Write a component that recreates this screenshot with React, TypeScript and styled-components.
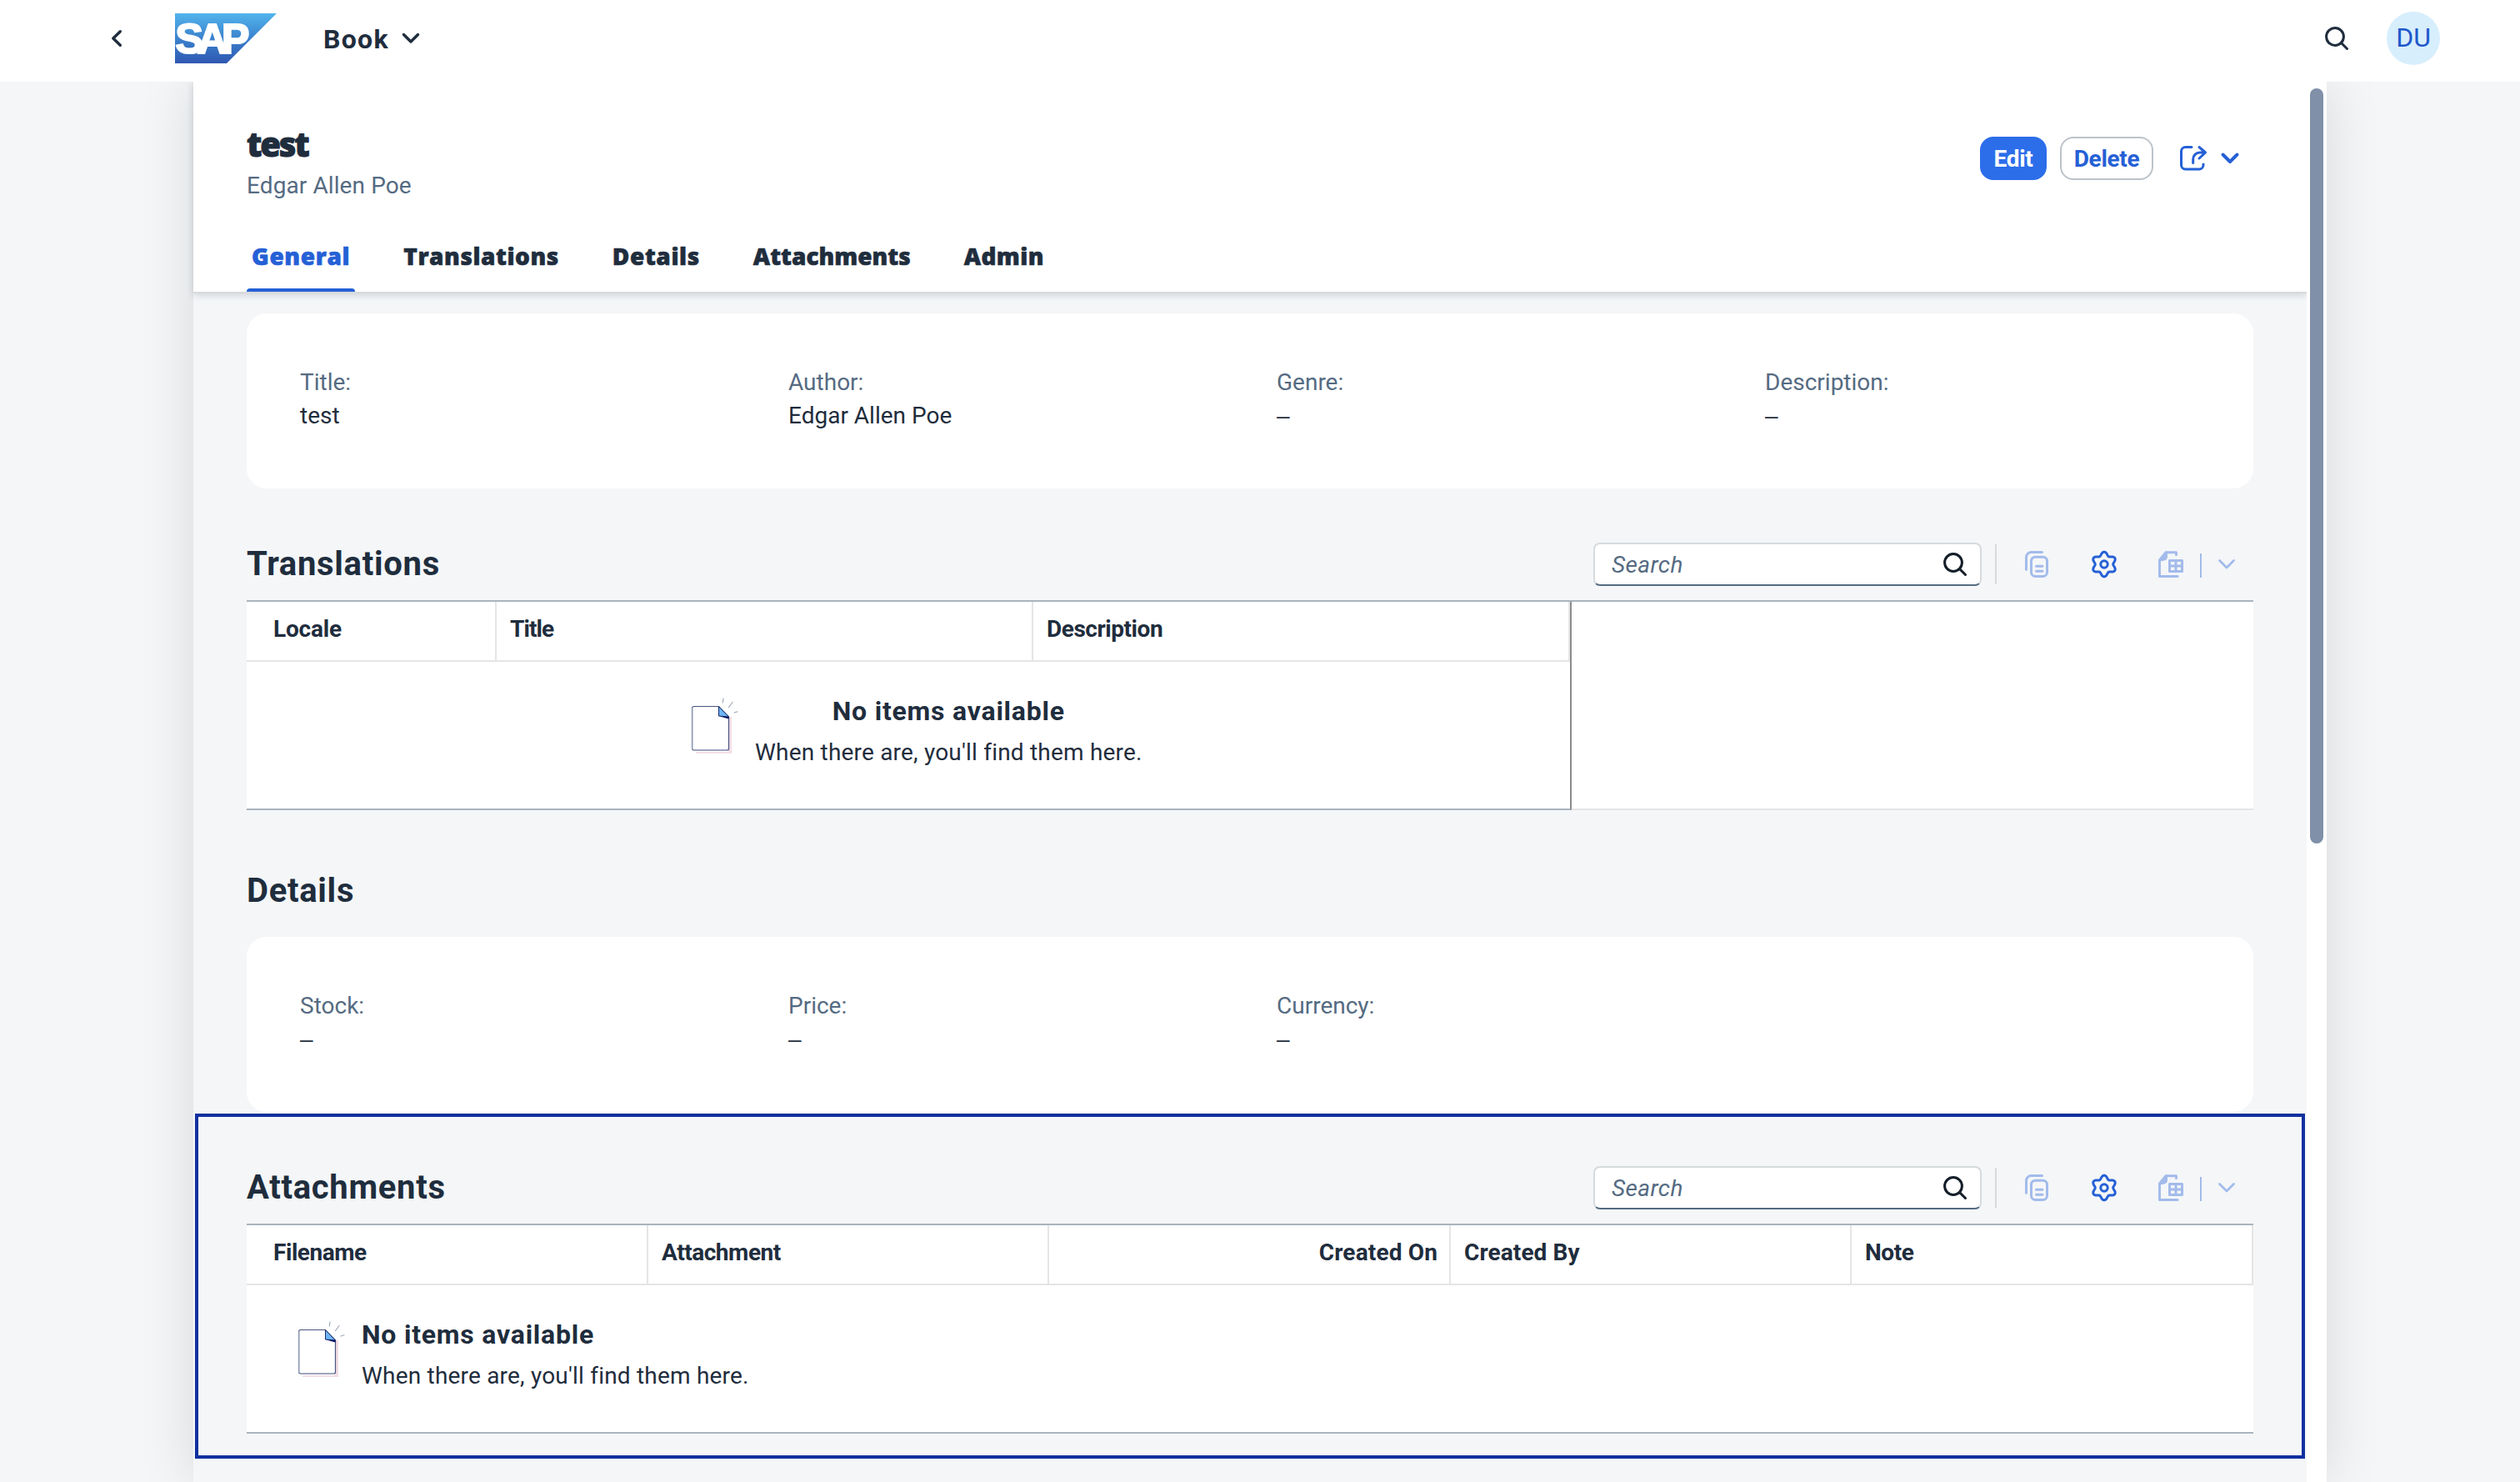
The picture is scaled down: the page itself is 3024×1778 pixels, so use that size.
import React from "react";
import styled, { createGlobalStyle, css } from "styled-components";

const ink = "#1f2d3d";
const blue = "#2560d6";
const faded = "#a3bbeb";

const GlobalStyle = createGlobalStyle`
  * { box-sizing: border-box; }
  body {
    margin: 0;
    background: #f4f6f8;
    color: ${ink};
    font-family: Roboto, "Liberation Sans", sans-serif;
    font-size: 28px;
  }
  h1, h2, h3, p { margin: 0; }
  svg { display: block; flex: none; overflow: visible; }
`;

const Screen = styled.div`
  display: flex;
  flex-direction: column;
  width: 3024px;
  height: 1778px;
  overflow: hidden;
`;

const ShellBar = styled.header`
  display: flex;
  align-items: center;
  height: 98px;
  flex: none;
  padding: 0 96px 6px 134px;
  background: #fff;
  z-index: 1;
`;

const AppMenu = styled.div`
  display: flex;
  align-items: center;
  gap: 15px;
  margin-left: 56px;
  font-size: 32px;
  font-weight: 700;
  letter-spacing: 1.3px;
  line-height: 44px;
`;

const AppName = styled.span`
  padding-top: 2px;
`;

const Logo = styled.div`
  margin-left: 64px;
`;

const ShellTools = styled.div`
  display: flex;
  align-items: center;
  gap: 46px;
  margin-left: auto;
`;

const Avatar = styled.div`
  width: 64px;
  height: 64px;
  border-radius: 50%;
  background: #d7eefd;
  color: #1f58cb;
  font-size: 32px;
  line-height: 63px;
  text-align: center;
`;

const Page = styled.main`
  display: flex;
  width: 2560px;
  flex: 1;
  min-height: 0;
  margin: 0 auto;
  background: #f4f6f8;
  box-shadow: 0 0 64px rgba(0, 0, 0, 0.12);
`;

const Content = styled.div`
  display: flex;
  flex-direction: column;
  width: 2536px;
`;

const Track = styled.div`
  width: 24px;
  padding: 8px 4px;
  background: #fff;
`;

const Thumb = styled.div`
  height: 906px;
  border-radius: 8px;
  background: #7f90a8;
`;

const PageHeader = styled.section`
  height: 254px;
  flex: none;
  padding: 52px 64px 0;
  background: #fff;
  border-bottom: 2px solid #d8dadb;
  box-shadow: 0 2px 8px rgba(34, 53, 72, 0.18);
`;

const TitleRow = styled.div`
  display: flex;
  justify-content: space-between;
  height: 116px;
`;

const PageTitle = styled.h1`
  font-family: "Open Sans", Roboto, sans-serif;
  font-size: 40px;
  font-weight: 800;
  line-height: 46px;
  letter-spacing: -2.2px;
  -webkit-text-stroke: 1px ${ink};
`;

const Subtitle = styled.p`
  margin-top: 11px;
  color: #556b82;
  line-height: 32px;
  letter-spacing: 0.1px;
`;

const Actions = styled.div`
  display: flex;
  align-items: center;
  gap: 16px;
  height: 52px;
  margin: 14px 17px 0 0;
`;

const Button = styled.button<{ $primary?: boolean }>`
  width: ${(p) => (p.$primary ? 80 : 112)}px;
  height: 52px;
  padding: 0;
  border: 2px solid ${(p) => (p.$primary ? "#2c6eea" : "#bcc3ca")};
  border-radius: 16px;
  background: ${(p) => (p.$primary ? "#2c6eea" : "#fff")};
  color: ${(p) => (p.$primary ? "#fff" : blue)};
  font: 700 28px Roboto, "Liberation Sans", sans-serif;
  letter-spacing: -0.3px;
`;

const ShareMenu = styled.div`
  display: flex;
  align-items: center;
  gap: 17px;
  margin-left: 16px;
`;

const Tabs = styled.nav`
  display: flex;
  gap: 52px;
  height: 84px;
`;

const Tab = styled.div<{ $active?: boolean; $tracking: number }>`
  position: relative;
  padding: 0 6px;
  font-family: "Open Sans", Roboto, sans-serif;
  font-weight: 800;
  line-height: 82px;
  letter-spacing: ${(p) => p.$tracking}px;
  color: ${(p) => (p.$active ? blue : ink)};
  -webkit-text-stroke: 0.6px currentColor;
  ${(p) =>
    p.$active &&
    css`
      &::after {
        content: "";
        position: absolute;
        left: 0;
        right: 0;
        bottom: 0;
        height: 4px;
        border-radius: 4px 4px 0 0;
        background: ${blue};
      }
    `}
`;

const Card = styled.section<{ $first?: boolean }>`
  display: grid;
  grid-template-columns: repeat(4, 586px);
  height: 210px;
  flex: none;
  margin: ${(p) => (p.$first ? 24 : 12)}px 64px 0;
  padding: 63px 0 0 64px;
  border-radius: 24px;
  background: #fff;
  line-height: 40px;
`;

const Label = styled.p`
  color: #556b82;
`;

const Value = styled.p<{ $blank?: boolean }>`
  ${(p) => p.$blank && 'font-family: "Liberation Sans", sans-serif;'}
`;

const Section = styled.section<{ $top: number }>`
  flex: none;
  margin: ${(p) => p.$top}px 64px 0;
`;

const Frame = styled.section`
  flex: none;
  height: 414px;
  margin: 2px 2px 0;
  padding: 42px 58px 0;
  border: 4px solid #1030a0;
`;

const SectionHead = styled.div`
  display: flex;
  align-items: center;
  height: 86px;
`;

const SectionTitle = styled.h2`
  font-size: 40px;
  font-weight: 700;
  line-height: 48px;
  letter-spacing: 0.7px;
`;

const Toolbar = styled.div`
  display: flex;
  align-items: center;
  margin-left: auto;
  padding-right: 2px;
`;

const SearchBox = styled.div`
  display: flex;
  align-items: center;
  justify-content: space-between;
  width: 466px;
  height: 52px;
  padding: 0 16px 0 20px;
  border: 2px solid #d5dadd;
  border-bottom-color: #556b82;
  border-radius: 8px;
  background: #fff;
  color: #556b82;
  font-style: italic;
  letter-spacing: 0.4px;
`;

const Divider = styled.div`
  width: 2px;
  height: 48px;
  margin: 0 12px 0 16px;
  background: #d9d9d9;
`;

const ToolButton = styled.div<{ $w?: number }>`
  display: flex;
  align-items: center;
  justify-content: center;
  width: ${(p) => p.$w ?? 72}px;
  height: 52px;
  margin-right: ${(p) => (p.$w ? 0 : 9)}px;
`;

const SplitLine = styled.div`
  width: 2px;
  height: 29px;
  margin-top: 2px;
  background: ${faded};
`;

const Table = styled.div`
  height: 252px;
  border-top: 2px solid #a9b4be;
  border-bottom: 2px solid #e5e5e5;
  background: #fff;
`;

const Grid = styled.div<{ $width: number; $edge?: boolean }>`
  width: ${(p) => p.$width}px;
  height: 250px;
  border-bottom: 2px solid #a9b4be;
  ${(p) => p.$edge && "border-right: 2px solid #8c8c8c;"}
`;

const HeadRow = styled.div`
  display: flex;
  height: 72px;
  border-bottom: 2px solid #e5e5e5;
`;

const HeadCell = styled.div<{ $w: number; $first?: boolean; $end?: boolean; $tracking?: number }>`
  width: ${(p) => p.$w}px;
  padding: 0 14px 5px ${(p) => (p.$first ? 32 : 16)}px;
  border-right: 2px solid #e5e5e5;
  font-weight: 700;
  letter-spacing: ${(p) => p.$tracking ?? -0.45}px;
  line-height: 65px;
  text-align: ${(p) => (p.$end ? "right" : "left")};
`;

const Empty = styled.div<{ $left: number; $center?: boolean }>`
  display: flex;
  gap: 18px;
  padding: 37px 0 0 ${(p) => p.$left}px;
  text-align: ${(p) => (p.$center ? "center" : "left")};
`;

const EmptyTitle = styled.h3`
  font-size: 32px;
  line-height: 44px;
  letter-spacing: 0.78px;
`;

const EmptyText = styled.p`
  margin-top: 8px;
  line-height: 40px;
  letter-spacing: 0.2px;
`;

const Stroke = ({ w, h, color, width = 3, children }: { w: number; h: number; color: string; width?: number; children: React.ReactNode }) => (
  <svg width={w} height={h} viewBox={`0 0 ${w} ${h}`} fill="none" stroke={color} strokeWidth={width} strokeLinecap="round" strokeLinejoin="round">
    {children}
  </svg>
);

const Chevron = ({ color, width = 3.4 }: { color: string; width?: number }) => (
  <Stroke w={22} h={14} color={color} width={width}>
    <path d="M2.5 2.5L11 11L19.5 2.5" />
  </Stroke>
);

const SearchIcon = ({ color }: { color: string }) => (
  <Stroke w={28} h={28} color={color}>
    <circle cx="12" cy="12" r="10.4" />
    <path d="M19.5 19.5L26.5 26.5" />
  </Stroke>
);

const gearPath =
  Array.from({ length: 72 }, (_, i) => {
    const t = (i / 72) * Math.PI * 2;
    const r = 12.8 + 2.1 * Math.cos(6 * t);
    return `${i ? "L" : "M"}${(15 + r * Math.sin(t)).toFixed(2)} ${(16 - r * Math.cos(t)).toFixed(2)}`;
  }).join("") + "Z";

const GearIcon = () => (
  <Stroke w={30} h={32} color={blue}>
    <path d={gearPath} />
    <circle cx="15" cy="16" r="4.2" />
  </Stroke>
);

const CopyIcon = () => (
  <Stroke w={32} h={32} color={faded}>
    <path d="M3.5 22.3V7.5a6 6 0 0 1 6-6H22.5" />
    <rect x="9.5" y="7.2" width="19" height="23.3" rx="5" />
    <path d="M15.5 18.3H23M15.5 24.3H23" />
  </Stroke>
);

const SheetIcon = () => (
  <Stroke w={32} h={32} color={faded}>
    <path d="M24 30.5H2.5V11L10 1.7H22.5V4.5" />
    <path d="M3 11L10.5 2V7a3 3 0 0 1-3 3Z" fill={faded} />
    <rect x="14.5" y="11.5" width="15" height="13" />
    <path d="M22 11.5V24.5M14.5 18H29.5" />
  </Stroke>
);

const ShareIcon = () => (
  <Stroke w={32} h={32} color={blue}>
    <path d="M14 2.5H6.5a5 5 0 0 0-5 5V24a5 5 0 0 0 5 5H23a5 5 0 0 0 5-5V23" />
    <path d="M15.7 21.5V17a8 8 0 0 1 8-8H30M23 2.5L30.5 9L23 16" />
  </Stroke>
);

const SapLogo = () => (
  <svg width="122" height="60" viewBox="0 0 122 60">
    <defs>
      <linearGradient id="sap" x1="0" y1="0" x2="0" y2="1">
        <stop offset="0" stopColor="#52b4ec" />
        <stop offset="0.5" stopColor="#3b82cd" />
        <stop offset="1" stopColor="#2f58b2" />
      </linearGradient>
    </defs>
    <path d="M0 0H122L62 60H0Z" fill="url(#sap)" />
    <text x="0.5" y="48" fill="#fff" stroke="#fff" strokeWidth="2.2" fontFamily="Liberation Sans, sans-serif" fontWeight="700" fontSize="50" letterSpacing="-7">
      SAP
    </text>
  </svg>
);

const Picture = styled.svg`
  margin-top: 5px;
`;

const Illustration = () => (
  <Picture width="58" height="70" viewBox="0 0 58 70">
    <path d="M5 66V68H48V24H44V66Z" fill="#f3dde6" />
    <path d="M2.5 11.5H32.5L44.5 24V62a2 2 0 0 1-2 2H2.5a2 2 0 0 1-2-2V13.5a2 2 0 0 1 2-2Z" fill="#fff" stroke="#4a5580" strokeWidth="1.2" />
    <path d="M0.8 13V63M2 64H43" stroke="#9aa3bd" strokeWidth="1.4" />
    <path d="M32.5 11.5L44.5 24L32.5 23Z" fill="#6cb5f5" stroke="#1b2a66" strokeWidth="1" />
    <path d="M33 23.3L44.5 24V26.5Z" fill="#00105e" />
    <path d="M38 2L37.3 7M49 6.5L44.5 12.5M55 17.8L51 19" stroke="#9fa9b8" strokeWidth="1.2" strokeLinecap="round" />
  </Picture>
);

const ListToolbar = () => (
  <Toolbar>
    <SearchBox>
      Search
      <SearchIcon color="#131e29" />
    </SearchBox>
    <Divider />
    <ToolButton><CopyIcon /></ToolButton>
    <ToolButton><GearIcon /></ToolButton>
    <ToolButton $w={70}><SheetIcon /></ToolButton>
    <SplitLine />
    <ToolButton $w={60}><Chevron color={faded} width={2.8} /></ToolButton>
  </Toolbar>
);

const Field = ({ label, value }: { label: string; value?: string }) => (
  <div>
    <Label>{label}</Label>
    <Value $blank={!value}>{value ?? "–"}</Value>
  </div>
);

const EmptyState = ({ left, center }: { left: number; center?: boolean }) => (
  <Empty $left={left} $center={center}>
    <Illustration />
    <div>
      <EmptyTitle>No items available</EmptyTitle>
      <EmptyText>When there are, you'll find them here.</EmptyText>
    </div>
  </Empty>
);

export default function App() {
  return (
    <>
      <GlobalStyle />
      <Screen>
        <ShellBar>
          <Stroke w={12} h={20} color={ink} width={3.4}>
            <path d="M10.3 1.7L1.8 10L10.3 18.3" />
          </Stroke>
          <Logo><SapLogo /></Logo>
          <AppMenu>
            <AppName>Book</AppName>
            <Chevron color={ink} />
          </AppMenu>
          <ShellTools>
            <SearchIcon color={ink} />
            <Avatar>DU</Avatar>
          </ShellTools>
        </ShellBar>
        <Page>
          <Content>
            <PageHeader>
              <TitleRow>
                <div>
                  <PageTitle>test</PageTitle>
                  <Subtitle>Edgar Allen Poe</Subtitle>
                </div>
                <Actions>
                  <Button $primary>Edit</Button>
                  <Button>Delete</Button>
                  <ShareMenu>
                    <ShareIcon />
                    <Chevron color={blue} width={4} />
                  </ShareMenu>
                </Actions>
              </TitleRow>
              <Tabs>
                <Tab $active $tracking={0.65}>General</Tab>
                <Tab $tracking={0.55}>Translations</Tab>
                <Tab $tracking={0.6}>Details</Tab>
                <Tab $tracking={0}>Attachments</Tab>
                <Tab $tracking={0.4}>Admin</Tab>
              </Tabs>
            </PageHeader>
            <Card $first>
              <Field label="Title:" value="test" />
              <Field label="Author:" value="Edgar Allen Poe" />
              <Field label="Genre:" />
              <Field label="Description:" />
            </Card>
            <Section $top={48}>
              <SectionHead>
                <SectionTitle>Translations</SectionTitle>
                <ListToolbar />
              </SectionHead>
              <Table>
                <Grid $width={1590} $edge>
                  <HeadRow>
                    <HeadCell $w={300} $first $tracking={-0.2}>Locale</HeadCell>
                    <HeadCell $w={644} $tracking={-0.9}>Title</HeadCell>
                    <HeadCell $w={644}>Description</HeadCell>
                  </HeadRow>
                  <EmptyState left={534} center />
                </Grid>
              </Table>
            </Section>
            <Section $top={54}>
              <SectionHead>
                <SectionTitle>Details</SectionTitle>
              </SectionHead>
            </Section>
            <Card>
              <Field label="Stock:" />
              <Field label="Price:" />
              <Field label="Currency:" />
            </Card>
            <Frame>
              <SectionHead>
                <SectionTitle>Attachments</SectionTitle>
                <ListToolbar />
              </SectionHead>
              <Table>
                <Grid $width={2408}>
                  <HeadRow>
                    <HeadCell $w={482} $first>Filename</HeadCell>
                    <HeadCell $w={481}>Attachment</HeadCell>
                    <HeadCell $w={482} $end $tracking={0.15}>Created On</HeadCell>
                    <HeadCell $w={481} $tracking={0.1}>Created By</HeadCell>
                    <HeadCell $w={482}>Note</HeadCell>
                  </HeadRow>
                  <EmptyState left={62} />
                </Grid>
              </Table>
            </Frame>
          </Content>
          <Track>
            <Thumb />
          </Track>
        </Page>
      </Screen>
    </>
  );
}
